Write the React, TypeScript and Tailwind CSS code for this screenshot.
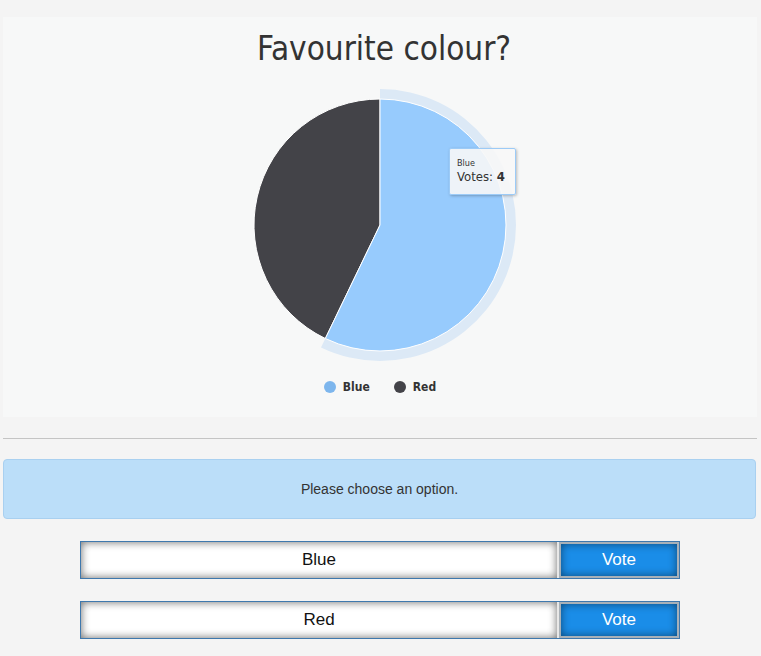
import React from "react";

const options = ["Blue", "Red"];

// pie geometry (centre 150,150 in the svg box)
const CX = 150;
const CY = 150;
const R = 126;
const BLUE_END = (4 / 7) * Math.PI * 2;

function pt(r: number, a: number) {
  return [CX + r * Math.sin(a), CY - r * Math.cos(a)];
}

function Pie() {
  const [ex, ey] = pt(R, BLUE_END);
  const [hx1, hy1] = pt(R + 10, 0);
  const [hx2, hy2] = pt(R + 10, BLUE_END);
  const blue = `M${CX} ${CY} L${CX} ${CY - R} A${R} ${R} 0 1 1 ${ex} ${ey} Z`;
  const red = `M${CX} ${CY} L${ex} ${ey} A${R} ${R} 0 0 1 ${CX} ${CY - R} Z`;
  const halo = `M${hx1} ${hy1} A${R + 10} ${R + 10} 0 1 1 ${hx2} ${hy2} L${ex} ${ey} A${R} ${R} 0 1 0 ${CX} ${CY - R} Z`;
  return (
    <svg width="300" height="300" viewBox="0 0 300 300" className="block">
      <path d={halo} fill="#dce9f6" />
      <path d={red} fill="#434348" stroke="#ffffff" strokeWidth="1" />
      <path d={blue} fill="#97cbfd" stroke="#ffffff" strokeWidth="1" />
    </svg>
  );
}

export default function App() {
  return (
    <div className="min-h-[656px] bg-[#f4f4f4] px-[3px] pt-[17px] font-['Liberation_Sans',Arial,sans-serif]">
      <div className="relative h-[400px] w-[754px] bg-[#f7f8f8] pt-[10px]">
        <div className="h-[44px] pl-[8px] text-center text-[33px] leading-[44px] text-[#333333] font-['DejaVu_Sans_Condensed','DejaVu_Sans',sans-serif] font-stretch-condensed">
          Favourite colour?
        </div>
        <div className="mt-[4px] flex justify-center">
          <Pie />
        </div>
        <div className="flex h-[24px] items-center justify-center gap-[24px] text-[12px] font-bold text-[#333333] font-['DejaVu_Sans_Condensed','DejaVu_Sans',sans-serif] font-stretch-condensed">
          <div className="flex items-center gap-[7px]">
            <span className="h-[12px] w-[12px] rounded-full bg-[#7db6ed]" />
            <span>Blue</span>
          </div>
          <div className="flex items-center gap-[7px]">
            <span className="h-[12px] w-[12px] rounded-full bg-[#434348]" />
            <span>Red</span>
          </div>
        </div>

        {/* tooltip */}
        <div className="absolute left-[446px] top-[131px] h-[47px] w-[67px] rounded-[2px] border border-[#9ccbf7] bg-[rgba(247,247,247,0.9)] px-[7px] pt-[9px] text-[#333333] shadow-[1px_1px_3px_rgba(0,0,0,0.25)] font-['DejaVu_Sans_Condensed','DejaVu_Sans',sans-serif] font-stretch-condensed">
          <div className="text-[9px] leading-[11px]">Blue</div>
          <div className="text-[13px] leading-[16px]">
            Votes: <b>4</b>
          </div>
        </div>
      </div>

      <div className="mt-[21px] h-px w-[754px] bg-[#c4c4c4]" />

      <div className="mt-[20px] flex h-[60px] w-[753px] items-center justify-center rounded-[4px] border border-[#a9d0f0] bg-[#bbdef9] text-[14px] text-[#333333]">
        Please choose an option.
      </div>

      <div className="mt-[22px] flex w-[754px] flex-col items-center gap-[22px] pb-[18px]">
        {options.map((o) => (
          <div key={o} className="flex h-[38px] w-[600px] border border-[#3f78ad] bg-[#e8e8e8]">
            <div className="flex flex-1 items-center justify-center bg-white text-[17px] text-[#111111] shadow-[inset_0_0_8px_rgba(0,0,0,0.6)]">
              {o}
            </div>
            <button className="ml-[2px] flex w-[120px] items-center justify-center border-2 border-[#a9b1b8] bg-[#1a8de8] text-[17px] text-white shadow-[inset_0_0_8px_rgba(0,0,0,0.5)]">
              Vote
            </button>
          </div>
        ))}
      </div>
    </div>
  );
}
